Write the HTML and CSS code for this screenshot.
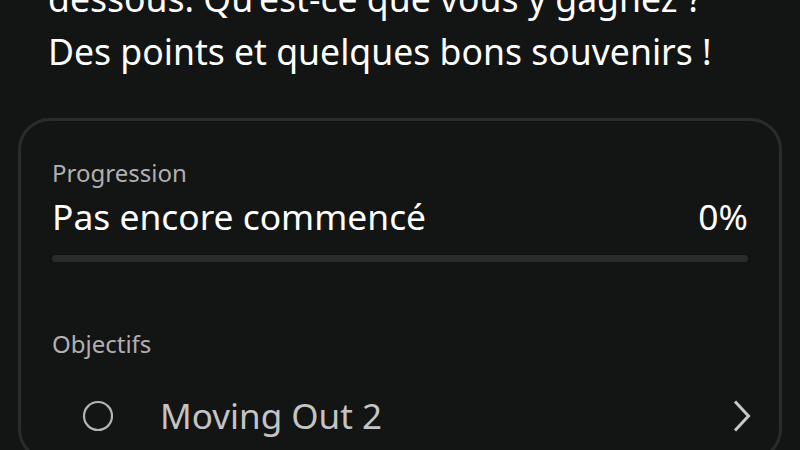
FILE: index.html
```html
<!DOCTYPE html>
<html lang="fr">
<head>
  <meta charset="UTF-8">
  <meta name="viewport" content="width=device-width, initial-scale=1.0">
  <title>Activité</title>
  <link rel="stylesheet" href="styles.css">
</head>
<body>

  <p class="intro">dessous. Qu'est-ce que vous y gagnez ?<br>Des points et quelques bons souvenirs !</p>

  <div class="card">
    <div class="label">Progression</div>
    <div class="progress-row">
      <span>Pas encore commencé</span>
      <span>0%</span>
    </div>
    <div class="bar"><div class="bar-fill" style="width: 0%"></div></div>

    <div class="label objectives">Objectifs</div>
    <div class="task">
      <svg class="task-circle" width="32" height="32" viewBox="0 0 32 32">
        <circle cx="16" cy="16" r="14" fill="none" stroke="#b4b4b4" stroke-width="2.2"/>
      </svg>
      <span class="task-name">Moving Out 2</span>
      <svg class="chevron" width="20" height="32" viewBox="0 0 20 32">
        <polyline points="3,1.5 16.5,16 3,30.5" fill="none" stroke="#c8c8c8" stroke-width="3"/>
      </svg>
    </div>
  </div>

</body>
</html>
```

FILE: styles.css
```css
body {
  font-family: "Noto Sans", "Open Sans", sans-serif;
  background-color: #131414;
  color: #fff;
  margin: 0;
  padding: 0 18px;
  overflow: hidden;
}

.intro {
  font-size: 35.6px;
  line-height: 53px;
  margin: -28px 0 0 30px;
}

.card {
  margin-top: 40px;
  border: 3px solid #2a2b2c;
  border-radius: 32px;
  padding: 37px 31px 20px 31px;
}

.label {
  color: #b0b0b0;
  font-size: 24px;
  line-height: 30px;
}

.progress-row {
  display: flex;
  justify-content: space-between;
  font-size: 35.4px;
  line-height: 44px;
  margin-top: 6px;
}

.bar {
  height: 7px;
  background-color: #2a2b2c;
  border-radius: 4px;
  margin-top: 17px;
}

.bar-fill {
  height: 100%;
  background-color: #fff;
  border-radius: 4px;
}

.objectives {
  margin-top: 67px;
}

.task {
  display: flex;
  align-items: center;
  height: 44px;
  margin-top: 35px;
}

.task-circle {
  margin-left: 30px;
}

.task-name {
  flex: 1;
  color: #c4c4c4;
  font-size: 35px;
  line-height: 44px;
  margin-left: 46px;
}

.chevron {
  margin-right: -4px;
}
```
